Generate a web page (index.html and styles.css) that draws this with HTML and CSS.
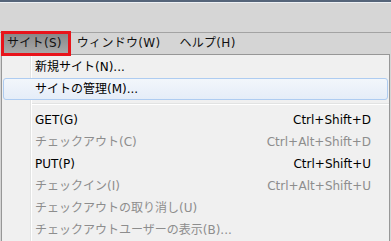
FILE: index.html
```html
<!DOCTYPE html>
<html lang="ja">
<head>
  <meta charset="UTF-8" />
  <title>サイトメニュー</title>
  <link rel="stylesheet" href="styles.css">
</head>
<body>

<div class="toolbar"></div>

<div class="menubar">
  <div class="menu-title aktif">サイト(S)</div>
  <div class="menu-title">ウィンドウ(W)</div>
  <div class="menu-title">ヘルプ(H)</div>
</div>

<div class="dropdown">
  <div class="item"><span>新規サイト(N)...</span></div>
  <div class="item hover"><span>サイトの管理(M)...</span></div>
  <div class="separator"></div>
  <div class="item"><span>GET(G)</span><span class="key">Ctrl+Shift+D</span></div>
  <div class="item mati"><span>チェックアウト(C)</span><span class="key">Ctrl+Alt+Shift+D</span></div>
  <div class="item"><span>PUT(P)</span><span class="key">Ctrl+Shift+U</span></div>
  <div class="item mati"><span>チェックイン(I)</span><span class="key">Ctrl+Alt+Shift+U</span></div>
  <div class="item mati"><span>チェックアウトの取り消し(U)</span></div>
  <div class="item mati"><span>チェックアウトユーザーの表示(B)...</span></div>
</div>

</body>
</html>
```

FILE: styles.css
```css
body {
  margin: 0;
  background: #d5d5d5;
  font-family: "DejaVu Sans", "Noto Sans CJK JP", sans-serif;
  font-size: 12px;
  color: #000;
  overflow: hidden;
  height: 241px;
}
.toolbar {
  height: 30px;
  border-top: 2px solid #56657a;
  box-shadow: inset 0 1px 0 #eef1f4;
  background: #d6d6d6;
}
.menubar {
  display: flex;
  height: 21px;
  border-top: 1px solid #a3a3a3;
  background: #d5d5d5;
  line-height: 21px;
  letter-spacing: 0.3px;
}
.menu-title {
  padding: 0 9px;
  margin-right: 1px;
  color: #111;
}
.menu-title.aktif {
  position: relative;
  margin-left: 4px;
  padding: 0 6px 0 3px;
  margin-right: 0;
  background: linear-gradient(#878787, #aaaaaa);
}
.menu-title.aktif::after {
  content: "";
  position: absolute;
  left: -3px;
  top: -2px;
  right: -3px;
  bottom: -2px;
  border: 3px solid #e8141b;
}
.dropdown {
  margin-left: 1px;
  width: 387px;
  border: 1px solid #979797;
  border-bottom: none;
  padding-top: 1px;
  background: linear-gradient(to right, #f0f0f0 28px, #e2e3e3 28px, #e2e3e3 29px, #fff 29px, #fff 30px, #f0f0f0 30px);
  height: 200px;
}
.item {
  display: flex;
  justify-content: space-between;
  height: 22px;
  line-height: 22px;
  padding: 0 18px 0 33px;
  white-space: nowrap;
}
.item.hover {
  margin: 0 1px;
  padding: 0 17px 0 31px;
  height: 20px;
  line-height: 20px;
  border: 1px solid #aeccf1;
  border-radius: 3px;
  background: linear-gradient(#f2f6fb, #e5edf8);
}
.mati {
  color: #8d8d8d;
}
.separator {
  height: 9px;
  margin-left: 30px;
  background: linear-gradient(#f0f0f0 3px, #e2e3e3 3px, #e2e3e3 4px, #fff 4px, #fff 5px, transparent 5px);
}
```
